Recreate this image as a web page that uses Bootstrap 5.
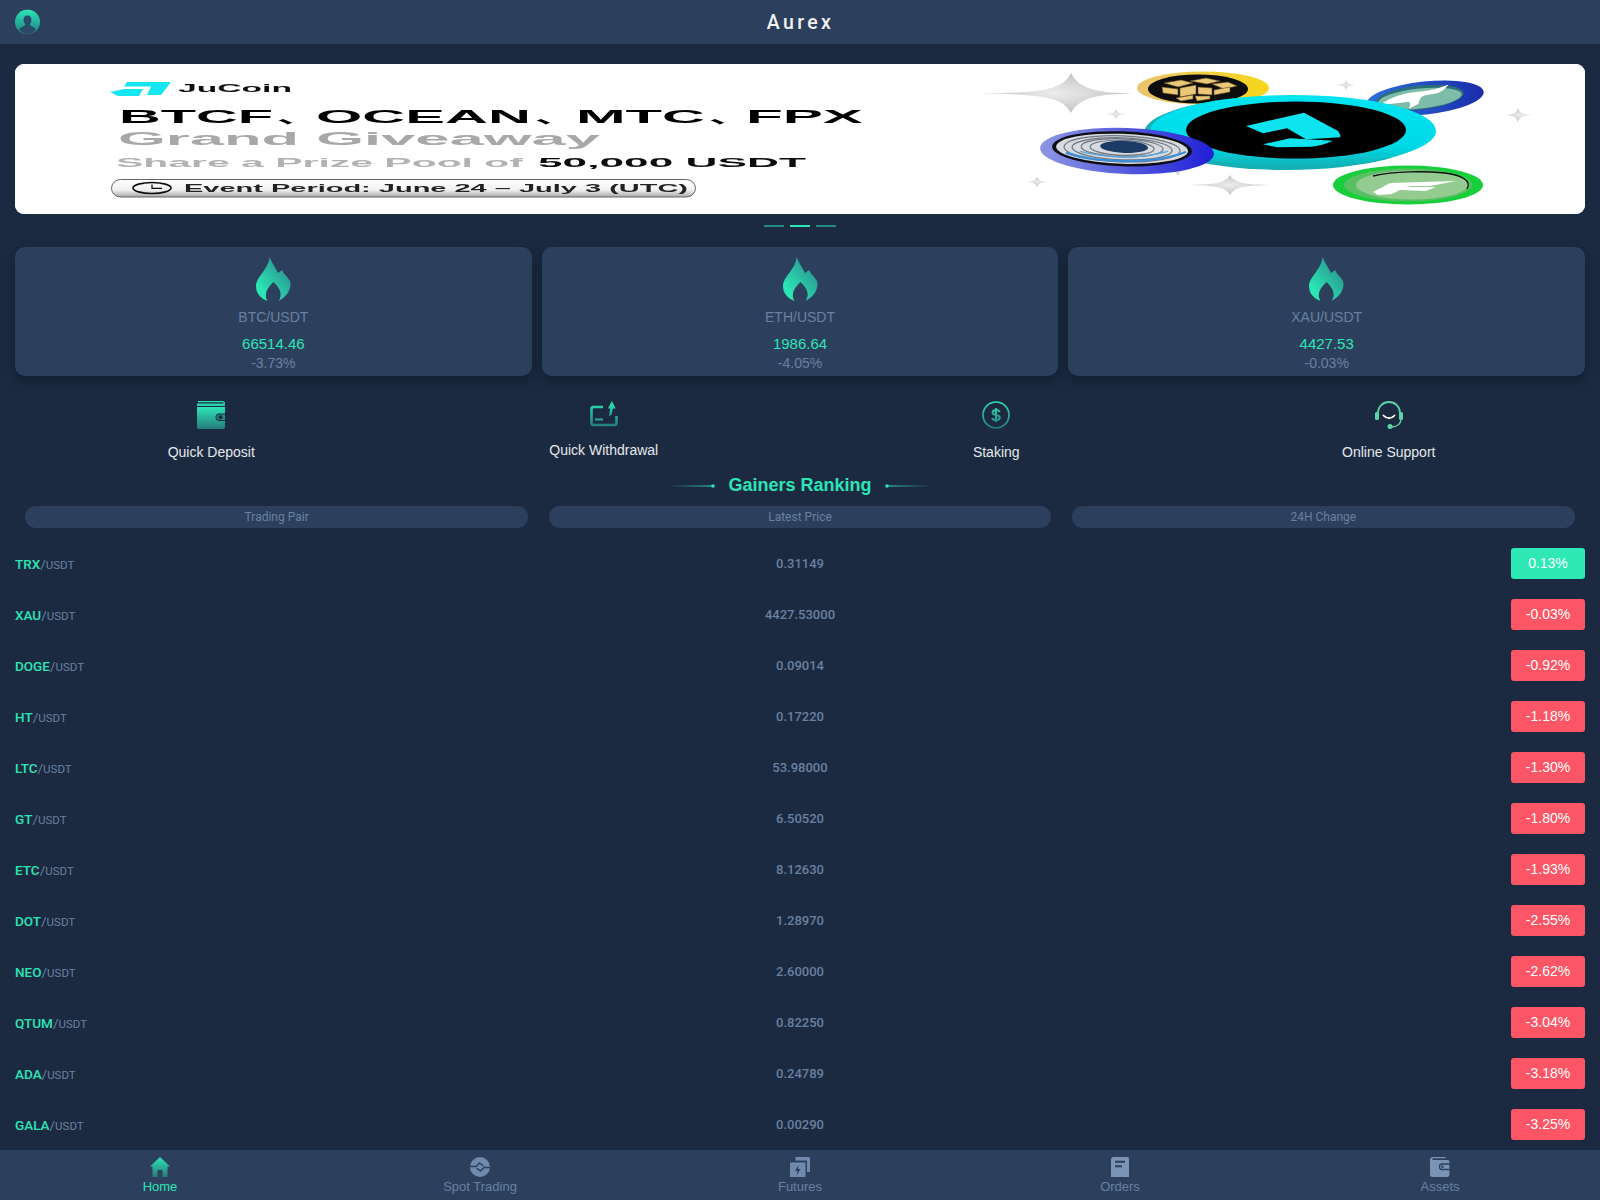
<!DOCTYPE html>
<html lang="en">
<head>
<meta charset="utf-8">
<title>Aurex</title>
<link href="https://cdn.jsdelivr.net/npm/bootstrap@5.3.0/dist/css/bootstrap.min.css" rel="stylesheet">
<style>
:root{--bgd:#1b2a41;--panel:#2c405e;--mint:#2ce5b5;--mute:#6a80a0;}
html,body{height:100%;}
body{background:var(--bgd);font-family:"Liberation Sans",Arial,sans-serif;color:#e8e8e8;}
.shell{height:100vh;}
.topbar{height:44px;background:var(--panel);padding:0 15px;}
.topbar .brand{font-family:Roboto,sans-serif;font-weight:500;font-size:19.5px;letter-spacing:3.4px;color:#f2f2f2;line-height:47px;margin-right:-1px;}
.avatar{width:25px;height:25px;display:block;}
.mainarea{padding:20px 15px 0;min-height:0;}
.hero{display:block;width:100%;height:150px;border-radius:9px;background:#fff;}
.dots{margin-top:11px;height:2px;gap:6px;}
.dots span{width:20px;height:2px;background:#1f8a85;}
.dots span.on{background:var(--mint);}
.tickers{margin-top:20px;gap:10px;}
.tick{flex:1 1 0;height:129px;background:var(--panel);border-radius:10px;padding-top:10px;box-shadow:0 5px 12px rgba(8,14,26,.4);text-align:center;}
.tick svg{display:block;margin:0 auto;width:35px;height:44px;}
.tick .pair{font-size:14px;line-height:21px;margin-top:5.5px;color:var(--mute);}
.tick .last{font-size:15px;line-height:20px;margin-top:6px;color:var(--mint);}
.tick .chg{font-size:14px;line-height:20px;margin-top:-.5px;color:var(--mute);}
.actions{padding-top:25px;}
.actions svg{display:block;margin:0 auto;}
.actions .lbl{font-size:14px;line-height:21px;margin-top:13px;color:#e6e8ea;}
.rank-title{margin-top:9px;line-height:27px;font-size:18px;font-weight:700;color:var(--mint);gap:12px;}
.rank-title svg{display:block;}
.heads{margin-top:6.5px;}
.heads .pill{height:22px;line-height:23.5px;margin:0 10px;border-radius:11px;background:var(--panel);color:var(--mute);font-family:Roboto,sans-serif;font-size:12px;text-align:center;}
.heads .col-4:nth-child(2) .pill{margin:0 10.5px;}
.rows{margin-top:10px;}
.rowline{height:51px;font-family:Roboto,sans-serif;}
.sym{font-size:13.5px;font-weight:500;color:var(--mint);padding-top:2px;}
.sym i{font-style:normal;font-weight:400;font-size:11.5px;color:var(--mute);}
.sym b{font-weight:400;color:var(--mute);}
.px{font-size:13px;font-weight:500;color:var(--mute);padding-top:2px;}
.chip{width:74px;height:31px;line-height:31px;border-radius:3px;font-family:"Liberation Sans",Arial,sans-serif;font-size:14px;text-align:center;color:#fff;background:#fc5565;}
.chip.up{background:#2ee8b6;}
.tabbar{height:50px;background:var(--panel);}
.tabitem{flex:1 1 0;text-align:center;padding-top:7px;font-size:13px;line-height:15px;color:var(--mute);}
.tabitem svg{display:block;margin:0 auto 2px;width:24px;height:20px;}
.tabitem.on{color:var(--mint);}
</style>
</head>
<body class="overflow-hidden">
<div class="shell d-flex flex-column">
  <header class="topbar position-relative d-flex align-items-center justify-content-center flex-shrink-0">
    <svg class="avatar position-absolute top-50 translate-middle-y" style="left:15px" viewBox="0 0 25 25" aria-hidden="true">
      <defs><linearGradient id="av" x1="0" y1="0" x2="0" y2="1"><stop offset="0" stop-color="#2ce5b5"/><stop offset="1" stop-color="#1f7f83"/></linearGradient></defs>
      <circle cx="12.5" cy="12.5" r="12.5" fill="url(#av)"/>
      <path d="M12.5 6c2.5 0 4 2 4 4.3 0 1.800-.8 3.200-1.700 4.200 0 1 .4 1.500 1.500 2 2 .9 3.700 1.700 4.500 3.500A12.400 12.400 0 0 1 12.500 25a12.400 12.400 0 0 1-8.300-4.900c.8-1.800 2.500-2.700 4.500-3.500 1.100-.5 1.500-1 1.500-2-.9-1-1.700-2.400-1.700-4.200C8.500 8 10 6 12.500 6z" fill="#2a4a68"/>
    </svg>
    <div class="brand">Aurex</div>
  </header>

  <main class="mainarea flex-grow-1 overflow-hidden">
    <svg class="hero" viewBox="15 64 1570 150" preserveAspectRatio="none" role="img" aria-label="JuCoin giveaway banner">
      <defs>
        <linearGradient id="pillg" x1="0" y1="0" x2="0" y2="1"><stop offset="0" stop-color="#ffffff"/><stop offset=".6" stop-color="#f0f0f0"/><stop offset="1" stop-color="#a8a8a8"/></linearGradient>
        <linearGradient id="goldg" x1="0" y1="0" x2="1" y2="0"><stop offset="0" stop-color="#e9c56f"/><stop offset="1" stop-color="#f7d61a"/></linearGradient>
        <linearGradient id="maing" x1="0" y1="0" x2="0" y2="1"><stop offset="0" stop-color="#00e4f2"/><stop offset=".72" stop-color="#00d9e6"/><stop offset="1" stop-color="#0fb0b4"/></linearGradient>
        <linearGradient id="purg" x1="0" y1="0" x2="1" y2="0"><stop offset="0" stop-color="#8d97e3"/><stop offset="1" stop-color="#1f1fd6"/></linearGradient>
        <linearGradient id="blug" x1="0" y1="0" x2="1" y2="0"><stop offset="0" stop-color="#2d72e0"/><stop offset="1" stop-color="#1a2ba8"/></linearGradient>
        <radialGradient id="stg"><stop offset="0" stop-color="#ececec"/><stop offset="1" stop-color="#c4c4c4"/></radialGradient>
        <filter id="soft" x="-2%" y="-10%" width="104%" height="120%"><feGaussianBlur stdDeviation=".35"/></filter>
      </defs>
      <rect x="15" y="64" width="1570" height="150" fill="#fff"/>
      <g filter="url(#soft)">
      <!-- logo -->
      <path d="M127 82H171L161 95H147L151 86.500H124Z" fill="#19e6f0"/>
      <path d="M110 92L124 89H143L139 96H118Z" fill="#19e6f0"/>
      <g font-family="'Liberation Sans','Noto Sans CJK SC',sans-serif" font-weight="700">
        <text x="178" y="92" font-size="10" textLength="114" lengthAdjust="spacingAndGlyphs" fill="#111">JuCoin</text>
        <g font-size="17.500" fill="#000">
          <text x="119" y="123.400" textLength="154" lengthAdjust="spacingAndGlyphs">BTCF</text>
          <text x="277" y="123.400" textLength="42" lengthAdjust="spacingAndGlyphs">、</text>
          <text x="316" y="123.400" textLength="215" lengthAdjust="spacingAndGlyphs">OCEAN</text>
          <text x="535" y="123.400" textLength="42" lengthAdjust="spacingAndGlyphs">、</text>
          <text x="576" y="123.400" textLength="129" lengthAdjust="spacingAndGlyphs">MTC</text>
          <text x="709" y="123.400" textLength="42" lengthAdjust="spacingAndGlyphs">、</text>
          <text x="746" y="123.400" textLength="117" lengthAdjust="spacingAndGlyphs">FPX</text>
        </g>
        <text x="118" y="145" font-size="17.500" textLength="482" lengthAdjust="spacingAndGlyphs" fill="#a8a8a8">Grand Giveaway</text>
        <text x="116" y="167.300" font-size="13.500" textLength="407" lengthAdjust="spacingAndGlyphs" fill="#b2b2b2">Share a Prize Pool of</text>
        <text x="538" y="167.300" font-size="13.500" textLength="268" lengthAdjust="spacingAndGlyphs" fill="#0a0a0a">50,000 USDT</text>
      </g>
      <rect x="111.500" y="179.500" width="584" height="17.500" rx="9" fill="url(#pillg)" stroke="#666" stroke-width="1"/>
      <ellipse cx="152" cy="188" rx="19" ry="5.500" fill="none" stroke="#111" stroke-width="1.600"/>
      <path d="M152 184.500v3.800h10" fill="none" stroke="#111" stroke-width="1.300"/>
      <text x="184" y="191.800" font-family="'Liberation Sans',sans-serif" font-weight="700" font-size="10.500" textLength="504" lengthAdjust="spacingAndGlyphs" fill="#222">Event Period: June 24 – July 3 (UTC)</text>
      <!-- stars -->
      <g fill="url(#stg)">
        <path d="M979 93.500C1040 92.500 1062 91 1071 73C1080 91 1102 92.500 1132 93.500C1102 94.500 1080 96 1071 113C1062 96 1040 94.500 979 93.500Z"/>
        <path d="M1186 185C1215 184.500 1225 183.500 1230 175C1235 183.500 1245 184.500 1273 185C1245 185.500 1235 186.500 1230 195C1225 186.500 1215 185.500 1186 185Z"/>
        <path d="M1104 114C1112 114 1115 113 1116 109C1117 113 1120 114 1128 114C1120 114 1117 115 1116 119C1115 115 1112 114 1104 114Z"/>
        <path d="M1334 85C1342 85 1345 84 1346 80C1347 84 1350 85 1358 85C1350 85 1347 86 1346 90C1345 86 1342 85 1334 85Z"/>
        <path d="M1502 115C1512 115 1516 114 1518 108C1520 114 1524 115 1536 115C1524 115 1520 116 1518 122C1516 116 1512 115 1502 115Z"/>
        <path d="M1025 182C1032 182 1035 181 1037 177C1039 181 1042 182 1050 182C1042 182 1039 183 1037 187C1035 183 1032 182 1025 182Z"/>
        <path d="M1166 170C1173 170 1176 169 1178 164C1180 169 1183 170 1192 170C1183 170 1180 171 1178 176C1176 171 1173 170 1166 170Z"/>
      </g>
      <!-- gold coin -->
      <ellipse cx="1203" cy="88" rx="66" ry="16.500" fill="url(#goldg)"/>
      <ellipse cx="1198" cy="89" rx="50" ry="14.500" fill="#0a0a0a"/>
      <g fill="#e9c878" stroke="#6a5228" stroke-width=".6">
        <path d="M1164 83l17-3 12 3-15 4z"/><path d="M1190 81l16-3 14 3-13 3z"/><path d="M1212 84l16-2 9 4-13 3z"/>
        <path d="M1162 87l16 2v6l-15-2z"/><path d="M1180 88l16-3v9l-16 3z"/><path d="M1198 87l14 1v7l-14-1z"/><path d="M1214 90l16-3v5l-16 3z"/>
        <path d="M1176 98l17-3v4l-12 2z"/><path d="M1195 96l15 0v3l-13 2z"/>
      </g>
      <!-- blue coin -->
      <g transform="rotate(-6 1425 98)">
        <ellipse cx="1425" cy="98" rx="59" ry="16.500" fill="url(#blug)"/>
        <ellipse cx="1420" cy="97" rx="44" ry="12" fill="#2a6f7a"/>
        <ellipse cx="1420" cy="98" rx="42" ry="10" fill="#7dbca8"/>
        <path d="M1380 100c10-6 22-9 38-9 10 0 18 0 32-4-6 6-10 8-20 8-8 0-10 2-12 8l-10 4c2-4 2-6 0-7-10 0-18 1-28 0z" fill="#fff"/>
      </g>
      <!-- main coin -->
      <ellipse cx="1286" cy="133" rx="142" ry="37" fill="#12b0b4"/>
      <ellipse cx="1293" cy="131" rx="143" ry="36" fill="url(#maing)"/>
      <ellipse cx="1296" cy="130" rx="110" ry="28.500" fill="#020202"/>
      <path d="M1246 126L1304 112.700L1338 131C1340 134 1341 136 1340 137.300L1306 139.300L1287 128.300L1263 133.300Z" fill="#0ae4ef"/>
      <path d="M1263 144.300L1290 138.300L1333 140.700C1326 144 1318 146 1311 146.700L1277 147.300Z" fill="#0ae4ef"/>
      <!-- purple coin -->
      <g transform="rotate(2 1127 151)">
      <ellipse cx="1127" cy="151" rx="87" ry="23" fill="url(#purg)"/>
      <ellipse cx="1122" cy="149" rx="70" ry="17.500" fill="#101018"/>
      <ellipse cx="1122" cy="149" rx="66" ry="15" fill="#d7dade"/>
      <g fill="none" stroke="#6e7783" stroke-width="1.200">
        <ellipse cx="1122" cy="149" rx="58" ry="13"/><ellipse cx="1122" cy="149" rx="50" ry="11"/><ellipse cx="1122" cy="148" rx="41" ry="9"/><ellipse cx="1122" cy="148" rx="32" ry="7.500"/>
      </g>
      <path d="M1066 155c30 9 86 9 120-5" fill="none" stroke="#3b8ed8" stroke-width="2.200"/>
      <path d="M1080 153c26 6 60 6 88-3" fill="none" stroke="#5aa6de" stroke-width="1.400"/>
      <ellipse cx="1124" cy="147" rx="24" ry="6" fill="#1e3a66"/>
      </g>
      <!-- green coin -->
      <ellipse cx="1408" cy="185" rx="75" ry="19.500" fill="#17cf3a"/>
      <ellipse cx="1408" cy="185" rx="64" ry="16.500" fill="#58c062"/>
      <ellipse cx="1412" cy="185" rx="56" ry="14.500" fill="#93cb90"/>
      <path d="M1373 176C1395 171 1425 171 1445 173C1462 175 1472 181 1467 189" fill="none" stroke="#111" stroke-width="1.300"/>
      <path d="M1373 192L1390 183L1456 181L1430 186H1412L1406 187L1436 187L1426 191L1400 190L1392 194L1378 195Z" fill="#fff"/>
      </g>
    </svg>

    <div class="dots d-flex justify-content-center"><span></span><span class="on"></span><span></span></div>

    <section class="tickers d-flex">
      <div class="tick">
        <svg viewBox="0 0 35 44" aria-hidden="true"><defs><linearGradient id="fl1" x1="0" y1="1" x2="1" y2="0"><stop offset=".2" stop-color="#2ce5b5"/><stop offset="1" stop-color="#287f85"/></linearGradient></defs><path d="M13.500 0C16 6 19 10 22 16C23.500 15 24.500 14 26.500 13C26.500 16 31 19 34 24C36 31 32 39 22.500 44C26.500 38 25 32 17.500 25C10 32 8 38 11.500 44C4 41 0 36 0 29C0 20 13 12 13.500 0Z" fill="url(#fl1)"/></svg>
        <div class="pair">BTC/USDT</div><div class="last">66514.46</div><div class="chg">-3.73%</div>
      </div>
      <div class="tick">
        <svg viewBox="0 0 35 44" aria-hidden="true"><defs><linearGradient id="fl2" x1="0" y1="1" x2="1" y2="0"><stop offset=".2" stop-color="#2ce5b5"/><stop offset="1" stop-color="#287f85"/></linearGradient></defs><path d="M13.500 0C16 6 19 10 22 16C23.500 15 24.500 14 26.500 13C26.500 16 31 19 34 24C36 31 32 39 22.500 44C26.500 38 25 32 17.500 25C10 32 8 38 11.500 44C4 41 0 36 0 29C0 20 13 12 13.500 0Z" fill="url(#fl2)"/></svg>
        <div class="pair">ETH/USDT</div><div class="last">1986.64</div><div class="chg">-4.05%</div>
      </div>
      <div class="tick">
        <svg viewBox="0 0 35 44" aria-hidden="true"><defs><linearGradient id="fl3" x1="0" y1="1" x2="1" y2="0"><stop offset=".2" stop-color="#2ce5b5"/><stop offset="1" stop-color="#287f85"/></linearGradient></defs><path d="M13.500 0C16 6 19 10 22 16C23.500 15 24.500 14 26.500 13C26.500 16 31 19 34 24C36 31 32 39 22.500 44C26.500 38 25 32 17.500 25C10 32 8 38 11.500 44C4 41 0 36 0 29C0 20 13 12 13.500 0Z" fill="url(#fl3)"/></svg>
        <div class="pair">XAU/USDT</div><div class="last">4427.53</div><div class="chg">-0.03%</div>
      </div>
    </section>

    <section class="actions row g-0 text-center">
      <div class="col-3">
        <svg width="28" height="28" viewBox="0 0 28 28" aria-hidden="true"><defs><linearGradient id="wa" x1="0" y1="0" x2="0" y2="1"><stop offset="0" stop-color="#2ce5b5"/><stop offset="1" stop-color="#257a7d"/></linearGradient></defs>
          <path d="M1 0.600h24.500c1.200 0 2 1 2 2.400" fill="none" stroke="#2ce5b5" stroke-width="1.200"/>
          <path d="M0 2.500h26c1 0 2 .6 2 1.800V5H0z" fill="#2ad3ab"/>
          <path d="M0 6h28v6.500h-5.500c-2.500 0-4 1.500-4 3.700s1.500 3.800 4 3.800H28v6c0 1-.7 2-2 2H1.500C.6 28 0 27.300 0 26.500z" fill="url(#wa)"/>
          <path d="M28 13.500h-5.500c-1.800 0-3 1-3 2.700s1.200 2.800 3 2.800H28z" fill="#238a84"/>
          <circle cx="23.500" cy="16.200" r="2" fill="#1b2a41"/>
        </svg>
        <div class="lbl">Quick Deposit</div>
      </div>
      <div class="col-3">
        <svg width="28" height="26" viewBox="0 0 28 26" aria-hidden="true"><defs><linearGradient id="wd" gradientUnits="userSpaceOnUse" x1="0" y1="0" x2="0" y2="26"><stop offset="0" stop-color="#2ce5b5"/><stop offset="1" stop-color="#247a7d"/></linearGradient></defs>
          <path d="M13 6H3.500C2.300 6 1.500 6.800 1.500 8v14c0 1.200.8 2 2 2h21c1.200 0 2-.8 2-2v-7" fill="none" stroke="url(#wd)" stroke-width="2.600"/>
          <path d="M5 18.500h8" stroke="url(#wd)" stroke-width="2.400" fill="none"/>
          <path d="M21.800 0l4 7.500h-2.800l-1.600 6-2.400 2 1.200-8h-2.300z" fill="url(#wd)"/>
        </svg>
        <div class="lbl">Quick Withdrawal</div>
      </div>
      <div class="col-3">
        <svg width="28" height="28" viewBox="0 0 28 28" aria-hidden="true"><defs><linearGradient id="st" gradientUnits="userSpaceOnUse" x1="0" y1="0" x2="0" y2="28"><stop offset="0" stop-color="#2ce5b5"/><stop offset="1" stop-color="#247a7d"/></linearGradient></defs>
          <circle cx="14" cy="14" r="13" fill="none" stroke="url(#st)" stroke-width="1.700"/>
          <path d="M17.600 11c-.4-1.300-1.800-2-3.600-2-2 0-3.400 1-3.400 2.500 0 3.500 7.200 1.800 7.200 5.100 0 1.500-1.600 2.500-3.800 2.500-2 0-3.400-.8-3.800-2.200M14 7v14" fill="none" stroke="url(#st)" stroke-width="2"/>
        </svg>
        <div class="lbl">Staking</div>
      </div>
      <div class="col-3">
        <svg width="28" height="28" viewBox="0 0 28 28" aria-hidden="true">
          <path d="M3 12C3 5.500 8 1 14 1s11 4.500 11 11" fill="none" stroke="#5dd3a4" stroke-width="1.800"/>
          <rect x="0" y="11" width="4" height="8" rx="1.500" fill="#5dd3a4"/><rect x="24" y="11" width="4" height="8" rx="1.500" fill="#5dd3a4"/>
          <path d="M26 19c-.5 4-4 6.500-9 7" fill="none" stroke="#5dd3a4" stroke-width="1.500"/>
          <circle cx="15" cy="25.500" r="2.500" fill="#5dd3a4"/>
          <path d="M8.500 14.500c3 3.500 8 3.500 11 0" fill="none" stroke="#fff" stroke-width="1.800" stroke-linecap="round"/>
        </svg>
        <div class="lbl">Online Support</div>
      </div>
    </section>

    <div class="rank-title d-flex justify-content-center align-items-center">
      <svg width="48" height="6" viewBox="0 0 48 6" aria-hidden="true"><defs><linearGradient id="la" x1="0" x2="1" y1="0" y2="0"><stop offset="0" stop-color="#2ce5b5" stop-opacity="0"/><stop offset="1" stop-color="#2ce5b5"/></linearGradient></defs><rect y="2.500" width="45" height="1" fill="url(#la)"/><circle cx="45" cy="3" r="1.800" fill="#2ce5b5"/></svg>
      <span>Gainers Ranking</span>
      <svg width="48" height="6" viewBox="0 0 48 6" aria-hidden="true"><defs><linearGradient id="lb" x1="0" x2="1" y1="0" y2="0"><stop offset="0" stop-color="#2ce5b5"/><stop offset="1" stop-color="#2ce5b5" stop-opacity="0"/></linearGradient></defs><rect x="3" y="2.500" width="45" height="1" fill="url(#lb)"/><circle cx="3" cy="3" r="1.800" fill="#2ce5b5"/></svg>
    </div>

    <div class="heads row g-0">
      <div class="col-4"><div class="pill">Trading Pair</div></div>
      <div class="col-4"><div class="pill">Latest Price</div></div>
      <div class="col-4"><div class="pill">24H Change</div></div>
    </div>

    <div class="rows">
      <div class="rowline row g-0 align-items-center"><div class="col-4 sym">TRX<b>/</b><i>USDT</i></div><div class="col-4 px text-center">0.31149</div><div class="col-4 d-flex justify-content-end"><div class="chip up">0.13%</div></div></div>
      <div class="rowline row g-0 align-items-center"><div class="col-4 sym">XAU<b>/</b><i>USDT</i></div><div class="col-4 px text-center">4427.53000</div><div class="col-4 d-flex justify-content-end"><div class="chip">-0.03%</div></div></div>
      <div class="rowline row g-0 align-items-center"><div class="col-4 sym">DOGE<b>/</b><i>USDT</i></div><div class="col-4 px text-center">0.09014</div><div class="col-4 d-flex justify-content-end"><div class="chip">-0.92%</div></div></div>
      <div class="rowline row g-0 align-items-center"><div class="col-4 sym">HT<b>/</b><i>USDT</i></div><div class="col-4 px text-center">0.17220</div><div class="col-4 d-flex justify-content-end"><div class="chip">-1.18%</div></div></div>
      <div class="rowline row g-0 align-items-center"><div class="col-4 sym">LTC<b>/</b><i>USDT</i></div><div class="col-4 px text-center">53.98000</div><div class="col-4 d-flex justify-content-end"><div class="chip">-1.30%</div></div></div>
      <div class="rowline row g-0 align-items-center"><div class="col-4 sym">GT<b>/</b><i>USDT</i></div><div class="col-4 px text-center">6.50520</div><div class="col-4 d-flex justify-content-end"><div class="chip">-1.80%</div></div></div>
      <div class="rowline row g-0 align-items-center"><div class="col-4 sym">ETC<b>/</b><i>USDT</i></div><div class="col-4 px text-center">8.12630</div><div class="col-4 d-flex justify-content-end"><div class="chip">-1.93%</div></div></div>
      <div class="rowline row g-0 align-items-center"><div class="col-4 sym">DOT<b>/</b><i>USDT</i></div><div class="col-4 px text-center">1.28970</div><div class="col-4 d-flex justify-content-end"><div class="chip">-2.55%</div></div></div>
      <div class="rowline row g-0 align-items-center"><div class="col-4 sym">NEO<b>/</b><i>USDT</i></div><div class="col-4 px text-center">2.60000</div><div class="col-4 d-flex justify-content-end"><div class="chip">-2.62%</div></div></div>
      <div class="rowline row g-0 align-items-center"><div class="col-4 sym">QTUM<b>/</b><i>USDT</i></div><div class="col-4 px text-center">0.82250</div><div class="col-4 d-flex justify-content-end"><div class="chip">-3.04%</div></div></div>
      <div class="rowline row g-0 align-items-center"><div class="col-4 sym">ADA<b>/</b><i>USDT</i></div><div class="col-4 px text-center">0.24789</div><div class="col-4 d-flex justify-content-end"><div class="chip">-3.18%</div></div></div>
      <div class="rowline row g-0 align-items-center"><div class="col-4 sym">GALA<b>/</b><i>USDT</i></div><div class="col-4 px text-center">0.00290</div><div class="col-4 d-flex justify-content-end"><div class="chip">-3.25%</div></div></div>
    </div>
  </main>

  <nav class="tabbar d-flex flex-shrink-0">
    <div class="tabitem on">
      <svg viewBox="0 0 24 20" aria-hidden="true"><defs><linearGradient id="hm" x1="0" y1="0" x2="0" y2="1"><stop offset="0" stop-color="#2ce5b5"/><stop offset="1" stop-color="#267a7c"/></linearGradient></defs><path d="M12 0l10 9.500h-2.500V20h-5v-7h-5v7h-5V9.500H2z" fill="url(#hm)"/></svg>
      Home
    </div>
    <div class="tabitem">
      <svg viewBox="0 0 24 20" aria-hidden="true"><circle cx="12" cy="10" r="10" fill="#7189ac"/><path d="M2 9.500h6l3.500-3.500 4 3M22 10.500h-6L12.500 14l-4-3" fill="none" stroke="#2c405e" stroke-width="1.500"/></svg>
      Spot Trading
    </div>
    <div class="tabitem">
      <svg viewBox="0 0 24 20" aria-hidden="true"><path d="M7.500 0H20.500c.8 0 1.500.7 1.500 1.500V15h-3V3.500H7.500z" fill="#7189ac"/><path d="M2 5.500h15.500V20H2z" fill="#7189ac"/><path d="M10.500 8l-3.500 6h2.500l-1 4.500 4-6.500h-2.500z" fill="#2c405e"/></svg>
      Futures
    </div>
    <div class="tabitem">
      <svg viewBox="0 0 24 20" aria-hidden="true"><path d="M5.500 0H19c1.200 0 2 .8 2 2v18H3V2.500C3 1 4 0 5.500 0z" fill="#7b93b5"/><path d="M7 3.800h10v2H7zM7 8.300h7v2H7z" fill="#2c405e"/></svg>
      Orders
    </div>
    <div class="tabitem">
      <svg viewBox="0 0 24 20" aria-hidden="true"><path d="M2 3C2 1.200 3.200 0 5 0H17.500V1.300H4.500V3H19.500C20.800 3 21.500 3.800 21.500 5V17.500C21.500 19 20.500 20 19 20H4.500C3 20 2 19 2 17.500z" fill="#7b93b5"/><path d="M22 7h-8c-1.500 0-2.500 1.100-2.500 2.800s1 2.700 2.500 2.700h8z" fill="#7b93b5" stroke="#2c405e" stroke-width="1.300"/><circle cx="14.500" cy="9.800" r="1.200" fill="#2c405e"/></svg>
      Assets
    </div>
  </nav>
</div>
<script src="https://cdn.jsdelivr.net/npm/bootstrap@5.3.0/dist/js/bootstrap.bundle.min.js"></script>
</body>
</html>
